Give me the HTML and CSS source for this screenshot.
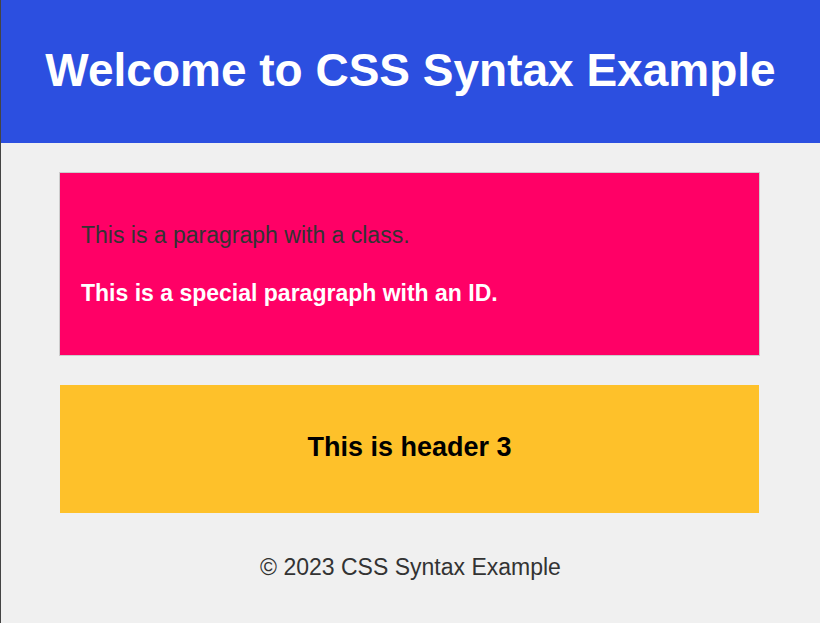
FILE: index.html
```html
<!DOCTYPE html>
<html>
<head>
<meta charset="utf-8">
<link rel="stylesheet" href="styles.css">
</head>
<body>
<header class="site-header">
  <h1 class="title">Welcome to CSS Syntax Example</h1>
</header>
<main class="main">
  <section class="pink-box">
    <p class="class-para">This is a paragraph with a class.</p>
    <p class="id-para">This is a special paragraph with an ID.</p>
  </section>
  <section class="yellow-box">
    <h3 class="h3">This is header 3</h3>
  </section>
</main>
<footer class="footer">© 2023 CSS Syntax Example</footer>
</body>
</html>
```
FILE: styles.css
```css
html, body { margin: 0; padding: 0; }
body {
  background: #f0f0f0;
  border-left: 1px solid #444;
  min-height: 623px;
  box-sizing: border-box;
  font-family: "Liberation Sans", Arial, sans-serif;
}
.site-header {
  background: #2c4fe0;
  height: 143px;
  box-sizing: border-box;
  padding-bottom: 3px;
  display: flex;
  align-items: center;
  justify-content: center;
}
.title {
  margin: 0;
  color: #fff;
  font-size: 46px;
  font-weight: bold;
  line-height: 1;
}
.main {
  width: 699px;
  margin: 30px 0 0 59px;
  display: flex;
  flex-direction: column;
  gap: 30px;
}
.pink-box {
  background: #ff0066;
  outline: 1px solid #cccccc;
  padding: 49px 21px 49px;
  display: flex;
  flex-direction: column;
  gap: 32px;
}
.class-para {
  margin: 0;
  color: #333;
  font-size: 23px;
  line-height: 26px;
}
.id-para {
  margin: 0;
  color: #fff;
  font-size: 23px;
  font-weight: bold;
  line-height: 26px;
}
.yellow-box {
  background: #fec12a;
  height: 128px;
  box-sizing: border-box;
  padding-bottom: 3px;
  display: flex;
  align-items: center;
  justify-content: center;
}
.h3 {
  margin: 0;
  font-size: 27px;
  font-weight: bold;
  color: #000;
  line-height: 1;
}
.footer {
  text-align: center;
  color: #333;
  font-size: 23px;
  line-height: 26px;
  margin-top: 41px;
}
```
